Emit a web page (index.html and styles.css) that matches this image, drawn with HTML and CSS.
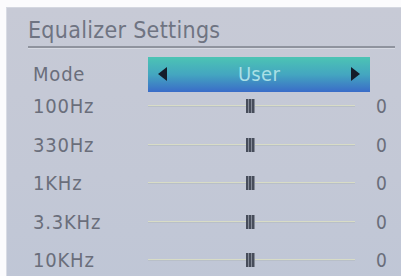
FILE: index.html
```html
<!DOCTYPE html>
<html>
<head>
<meta charset="utf-8">
<link rel="stylesheet" href="styles.css">
</head>
<body>
<div class="panel">
  <div class="title">Equalizer Settings</div>
  <div class="divider"></div>
  <div class="rows">
    <div class="row mode-row">
      <div class="label">Mode</div>
      <div class="mode">
        <span class="arrow left"></span>
        <span class="mode-text">User</span>
        <span class="arrow right"></span>
      </div>
    </div>
    <div class="row">
      <div class="label">100Hz</div>
      <div class="slider"><div class="track"></div><div class="thumb"></div></div>
      <div class="value">0</div>
    </div>
    <div class="row">
      <div class="label">330Hz</div>
      <div class="slider"><div class="track"></div><div class="thumb"></div></div>
      <div class="value">0</div>
    </div>
    <div class="row">
      <div class="label">1KHz</div>
      <div class="slider"><div class="track"></div><div class="thumb"></div></div>
      <div class="value">0</div>
    </div>
    <div class="row">
      <div class="label">3.3KHz</div>
      <div class="slider"><div class="track"></div><div class="thumb"></div></div>
      <div class="value">0</div>
    </div>
    <div class="row">
      <div class="label">10KHz</div>
      <div class="slider"><div class="track"></div><div class="thumb"></div></div>
      <div class="value">0</div>
    </div>
  </div>
</div>
</body>
</html>
```
FILE: styles.css
```css
html, body {
  margin: 0;
  padding: 0;
  background: #fbfbfd;
  width: 401px;
  height: 276px;
  overflow: hidden;
}
body {
  padding: 7px 0 0 6px;
  box-sizing: border-box;
  font-family: "DejaVu Sans Condensed", "DejaVu Sans", sans-serif;
}
.panel {
  width: 410px;
  height: 280px;
  background: linear-gradient(180deg, #c7cad6 0%, #c3c8d6 60%, #bfc6d6 100%);
  border-left: 1px solid #d8dbe4;
  border-top: 1px solid #d4d7e0;
  box-sizing: border-box;
  padding: 8px 0 0 21px;
}
.title {
  font-size: 23px;
  line-height: 28px;
  color: #6f7482;
  letter-spacing: 0.3px;
  height: 30px;
}
.divider {
  width: 367px;
  height: 2px;
  background: #8f939e;
  border-bottom: 1px solid #d6d9e2;
  margin-bottom: 7px;
}
.rows {
  display: flex;
  flex-direction: column;
}
.row {
  display: flex;
  align-items: center;
  height: 38.5px;
}
.mode-row {
  height: 36px;
  margin-bottom: -5px;
}
.label {
  width: 120px;
  box-sizing: border-box;
  padding-left: 5px;
  font-size: 20px;
  color: #6a6e7b;
  letter-spacing: 0.8px;
}
.mode {
  width: 222px;
  height: 35px;
  background: linear-gradient(180deg, #4cc4b4 0%, #44a6c0 50%, #3a6cc8 100%);
  display: flex;
  align-items: center;
  justify-content: space-between;
  padding: 0 10px;
  box-sizing: border-box;
}
.mode-text {
  color: #a9dfe6;
  font-size: 20px;
  letter-spacing: 0.3px;
}
.arrow {
  width: 0;
  height: 0;
  border-top: 7px solid transparent;
  border-bottom: 7px solid transparent;
}
.arrow.left { border-right: 9px solid #151c2a; }
.arrow.right { border-left: 9px solid #151c2a; }
.slider {
  position: relative;
  width: 207px;
  height: 16px;
  display: flex;
  align-items: center;
}
.track {
  width: 100%;
  height: 1px;
  background: #d8dcc6;
  border-bottom: 1px solid #b8bfc8;
}
.thumb {
  position: absolute;
  left: 98px;
  top: 1px;
  width: 9px;
  height: 14px;
  background: repeating-linear-gradient(90deg, #474d5b 0 2px, #858b98 2px 3px);
}
.value {
  margin-left: 21px;
  font-size: 19px;
  color: #6a6e7b;
}
```
